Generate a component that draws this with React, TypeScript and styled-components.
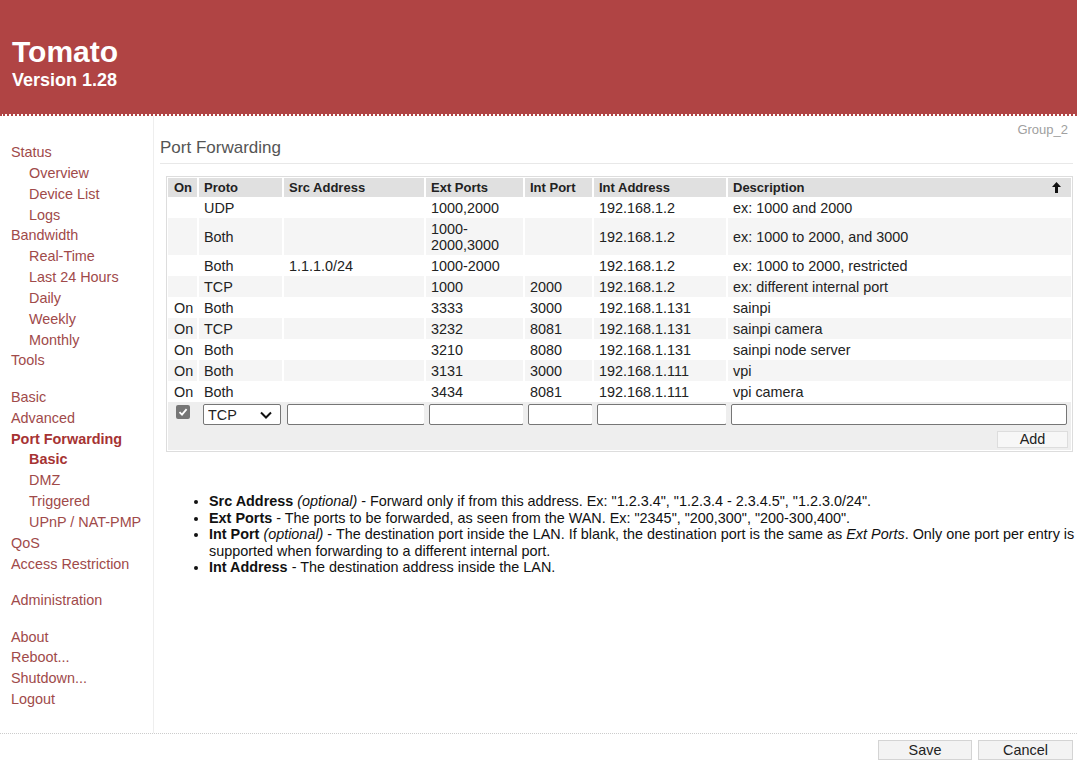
import React from 'react';
import styled, { createGlobalStyle } from 'styled-components';

type Rule = {
  on: string;
  proto: string;
  src: string;
  ext: React.ReactNode;
  intPort: string;
  addr: string;
  desc: string;
};

type MenuItem = { label: string; sub?: boolean; active?: boolean };

const rules: Rule[] = [
  { on: '', proto: 'UDP', src: '', ext: '1000,2000', intPort: '', addr: '192.168.1.2', desc: 'ex: 1000 and 2000' },
  {
    on: '',
    proto: 'Both',
    src: '',
    ext: (
      <>
        1000-
        <br />
        2000,3000
      </>
    ),
    intPort: '',
    addr: '192.168.1.2',
    desc: 'ex: 1000 to 2000, and 3000',
  },
  { on: '', proto: 'Both', src: '1.1.1.0/24', ext: '1000-2000', intPort: '', addr: '192.168.1.2', desc: 'ex: 1000 to 2000, restricted' },
  { on: '', proto: 'TCP', src: '', ext: '1000', intPort: '2000', addr: '192.168.1.2', desc: 'ex: different internal port' },
  { on: 'On', proto: 'Both', src: '', ext: '3333', intPort: '3000', addr: '192.168.1.131', desc: 'sainpi' },
  { on: 'On', proto: 'TCP', src: '', ext: '3232', intPort: '8081', addr: '192.168.1.131', desc: 'sainpi camera' },
  { on: 'On', proto: 'Both', src: '', ext: '3210', intPort: '8080', addr: '192.168.1.131', desc: 'sainpi node server' },
  { on: 'On', proto: 'Both', src: '', ext: '3131', intPort: '3000', addr: '192.168.1.111', desc: 'vpi' },
  { on: 'On', proto: 'Both', src: '', ext: '3434', intPort: '8081', addr: '192.168.1.111', desc: 'vpi camera' },
];

const menu: MenuItem[][] = [
  [
    { label: 'Status' },
    { label: 'Overview', sub: true },
    { label: 'Device List', sub: true },
    { label: 'Logs', sub: true },
    { label: 'Bandwidth' },
    { label: 'Real-Time', sub: true },
    { label: 'Last 24 Hours', sub: true },
    { label: 'Daily', sub: true },
    { label: 'Weekly', sub: true },
    { label: 'Monthly', sub: true },
    { label: 'Tools' },
  ],
  [
    { label: 'Basic' },
    { label: 'Advanced' },
    { label: 'Port Forwarding', active: true },
    { label: 'Basic', sub: true, active: true },
    { label: 'DMZ', sub: true },
    { label: 'Triggered', sub: true },
    { label: 'UPnP / NAT-PMP', sub: true },
    { label: 'QoS' },
    { label: 'Access Restriction' },
  ],
  [{ label: 'Administration' }],
  [{ label: 'About' }, { label: 'Reboot...' }, { label: 'Shutdown...' }, { label: 'Logout' }],
];

// column widths: On, Proto, Src Address, Ext Ports, Int Port, Int Address (Description takes the rest)
const widths = [30, 85, 142, 99, 69, 134];

const SortArrow = () => (
  <svg width="9" height="11" viewBox="0 0 9 11">
    <polygon points="4.5,0 9,5 6,5 6,11 3,11 3,5 0,5" fill="#111" />
  </svg>
);

const App: React.FC = () => {
  return (
    <Page>
      <GlobalStyle />
      <Header>
        <Brand>Tomato</Brand>
        <Version>Version 1.28</Version>
      </Header>

      <Body>
        <Sidebar>
          {menu.map((group, gi) => (
            <MenuGroup key={gi}>
              {group.map((item, i) => (
                <MenuLink key={i} $sub={item.sub} $active={item.active}>
                  {item.label}
                </MenuLink>
              ))}
            </MenuGroup>
          ))}
        </Sidebar>

        <Main>
          <GroupName>Group_2</GroupName>
          <Title>Port Forwarding</Title>

          <TableBox>
            <Table>
              <colgroup>
                {widths.map((w, i) => (
                  <col key={i} style={{ width: w }} />
                ))}
                <col />
              </colgroup>
              <thead>
                <tr>
                  <HeadCell>On</HeadCell>
                  <HeadCell>Proto</HeadCell>
                  <HeadCell>Src Address</HeadCell>
                  <HeadCell>Ext Ports</HeadCell>
                  <HeadCell>Int Port</HeadCell>
                  <HeadCell>Int Address</HeadCell>
                  <HeadCell>
                    Description
                    <ArrowSlot>
                      <SortArrow />
                    </ArrowSlot>
                  </HeadCell>
                </tr>
              </thead>
              <tbody>
                {rules.map((r, i) => (
                  <Row key={i} $alt={i % 2 === 1}>
                    <Cell>{r.on}</Cell>
                    <Cell>{r.proto}</Cell>
                    <Cell>{r.src}</Cell>
                    <Cell>{r.ext}</Cell>
                    <Cell>{r.intPort}</Cell>
                    <Cell>{r.addr}</Cell>
                    <Cell>{r.desc}</Cell>
                  </Row>
                ))}
                <tr>
                  <EditCell>
                    <CheckBox>
                      <svg width="10" height="10" viewBox="0 0 10 10">
                        <polyline points="1.5,5.2 4,7.6 8.6,2.2" fill="none" stroke="#fff" strokeWidth="1.8" />
                      </svg>
                    </CheckBox>
                  </EditCell>
                  <EditCell>
                    <SelectWrap>
                      <ProtoSelect defaultValue="TCP">
                        <option>TCP</option>
                        <option>UDP</option>
                        <option>Both</option>
                      </ProtoSelect>
                      <Chevron width="14" height="14" viewBox="0 0 14 14">
                        <polyline points="2,4.5 7,9.5 12,4.5" fill="none" stroke="#111" strokeWidth="2" />
                      </Chevron>
                    </SelectWrap>
                  </EditCell>
                  <EditCell>
                    <TextInput />
                  </EditCell>
                  <EditCell>
                    <TextInput />
                  </EditCell>
                  <EditCell>
                    <TextInput />
                  </EditCell>
                  <EditCell>
                    <TextInput />
                  </EditCell>
                  <EditCell>
                    <TextInput />
                  </EditCell>
                </tr>
                <tr>
                  <AddCell colSpan={7}>
                    <AddButton>Add</AddButton>
                  </AddCell>
                </tr>
              </tbody>
            </Table>
          </TableBox>

          <Notes>
            <li>
              <b>Src Address</b> <i>(optional)</i> - Forward only if from this address. Ex: "1.2.3.4", "1.2.3.4 - 2.3.4.5",
              "1.2.3.0/24".
            </li>
            <li>
              <b>Ext Ports</b> - The ports to be forwarded, as seen from the WAN. Ex: "2345", "200,300", "200-300,400".
            </li>
            <li>
              <b>Int Port</b> <i>(optional)</i> - The destination port inside the LAN. If blank, the destination port is the
              same as <i>Ext Ports</i>. Only one port per entry is supported when forwarding to a different internal port.
            </li>
            <li>
              <b>Int Address</b> - The destination address inside the LAN.
            </li>
          </Notes>
        </Main>
      </Body>

      <Footer>
        <FooterButton $width={94}>Save</FooterButton>
        <FooterButton $width={95}>Cancel</FooterButton>
      </Footer>
    </Page>
  );
};

export default App;

const GlobalStyle = createGlobalStyle`
  body {
    margin: 0;
    background: #fff;
    font-family: "Liberation Sans", Arial, sans-serif;
    font-size: 14.4px;
    color: #222;
  }
`;

const Page = styled.div`
  width: 1077px;
  min-height: 761px;
`;

const Header = styled.header`
  height: 78px;
  padding: 36px 0 0 12px;
  background: #b04444;
  background-clip: padding-box;
  border-bottom: 2px dotted #b04444;
  color: #fff;
`;

const Brand = styled.div`
  font-size: 30px;
  font-weight: bold;
  line-height: 32px;
`;

const Version = styled.div`
  margin-top: 2px;
  font-size: 18px;
  font-weight: bold;
  line-height: 20px;
`;

const Body = styled.div`
  display: flex;
  min-height: 617px;
`;

const Sidebar = styled.nav`
  width: 153px;
  flex-shrink: 0;
  padding-top: 26px;
  border-right: 1px solid #eee;
`;

const MenuGroup = styled.div`
  margin-bottom: 15.6px;
`;

const MenuLink = styled.div<{ $sub?: boolean; $active?: boolean }>`
  padding-left: ${(p) => (p.$sub ? '29px' : '11px')};
  font-size: 14.4px;
  line-height: 20.85px;
  white-space: nowrap;
  color: ${(p) => (p.$active ? '#a63333' : '#a04a4a')};
  font-weight: ${(p) => (p.$active ? 'bold' : 'normal')};
`;

const Main = styled.main`
  flex: 1;
  min-width: 0;
  padding: 0 4px 0 6px;
`;

const GroupName = styled.div`
  margin-top: 6px;
  padding-right: 5px;
  text-align: right;
  font-size: 13px;
  line-height: 16px;
  color: #a0a0a0;
`;

const Title = styled.h1`
  margin: 0;
  padding-bottom: 5px;
  border-bottom: 1px solid #e8e8e8;
  font-size: 17px;
  font-weight: normal;
  line-height: 20px;
  color: #555;
`;

const TableBox = styled.div`
  margin: 12px 0 0 6px;
  padding: 1px;
  border: 1px solid #ddd;
  background: #fff;
`;

const Table = styled.table`
  width: 100%;
  table-layout: fixed;
  border-collapse: collapse;
`;

const HeadCell = styled.th`
  padding: 1.5px 5px;
  border-left: 2px solid #fff;
  background: #e0e0e0;
  font-size: 13px;
  font-weight: bold;
  line-height: 16px;
  text-align: left;
  color: #222;
  &:first-child {
    border-left: none;
    padding-left: 6px;
  }
`;

const ArrowSlot = styled.span`
  float: right;
  margin: 2px 5px 0 0;
  line-height: 0;
`;

const Row = styled.tr<{ $alt: boolean }>`
  background: ${(p) => (p.$alt ? '#f5f5f5' : '#fff')};
`;

const Cell = styled.td`
  padding: 2.5px 5px;
  border-left: 2px solid #fff;
  font-size: 14.4px;
  line-height: 16px;
  vertical-align: middle;
  color: #222;
  &:first-child {
    border-left: none;
    padding-left: 6px;
  }
`;

const EditCell = styled.td`
  padding: 2px 1px 2px 3px;
  border-left: 2px solid #eee;
  background: #eee;
  vertical-align: top;
  &:first-child {
    border-left: none;
    padding: 2px 0 0 8px;
  }
  &:last-child {
    padding-right: 6px;
  }
`;

const CheckBox = styled.span`
  display: flex;
  align-items: center;
  justify-content: center;
  width: 14px;
  height: 14px;
  margin-top: 1px;
  border-radius: 2px;
  background: #767676;
`;

const SelectWrap = styled.div`
  position: relative;
  margin: 0 0 0 1px;
`;

const ProtoSelect = styled.select`
  appearance: none;
  display: block;
  width: 100%;
  height: 21px;
  box-sizing: border-box;
  padding: 0 0 0 4px;
  border: 1px solid #767676;
  border-radius: 2px;
  background: #fff;
  font-family: "Liberation Sans", Arial, sans-serif;
  font-size: 14.4px;
  color: #222;
`;

const Chevron = styled.svg`
  position: absolute;
  right: 8px;
  top: 4px;
  pointer-events: none;
`;

const TextInput = styled.input`
  display: block;
  width: calc(100% + 2px);
  height: 21px;
  box-sizing: border-box;
  border: 1px solid #767676;
  border-radius: 2px;
  background: #fff;
  font-family: "Liberation Sans", Arial, sans-serif;
  font-size: 14.4px;
`;

const AddCell = styled.td`
  padding: 4px 3px 2px;
  background: #eee;
  text-align: right;
`;

const AddButton = styled.button`
  width: 71px;
  height: 17px;
  padding: 0;
  border: 1px solid #ddd;
  background: #f7f7f7;
  font-family: "Liberation Sans", Arial, sans-serif;
  font-size: 14.4px;
  line-height: 15px;
  color: #222;
`;

const Notes = styled.ul`
  margin: 41px -4px 0 0;
  padding-left: 49px;
  font-size: 14.4px;
  line-height: 16.5px;
  color: #111;
`;

const Footer = styled.footer`
  display: flex;
  justify-content: flex-end;
  gap: 6px;
  padding: 6px 4px 0;
  border-top: 1px dotted #ccc;
`;

const FooterButton = styled.button<{ $width: number }>`
  width: ${(p) => p.$width}px;
  height: 20px;
  padding: 0;
  border: 1px solid #d4d4d4;
  background: #f3f3f3;
  font-family: "Liberation Sans", Arial, sans-serif;
  font-size: 14.4px;
  color: #222;
`;
